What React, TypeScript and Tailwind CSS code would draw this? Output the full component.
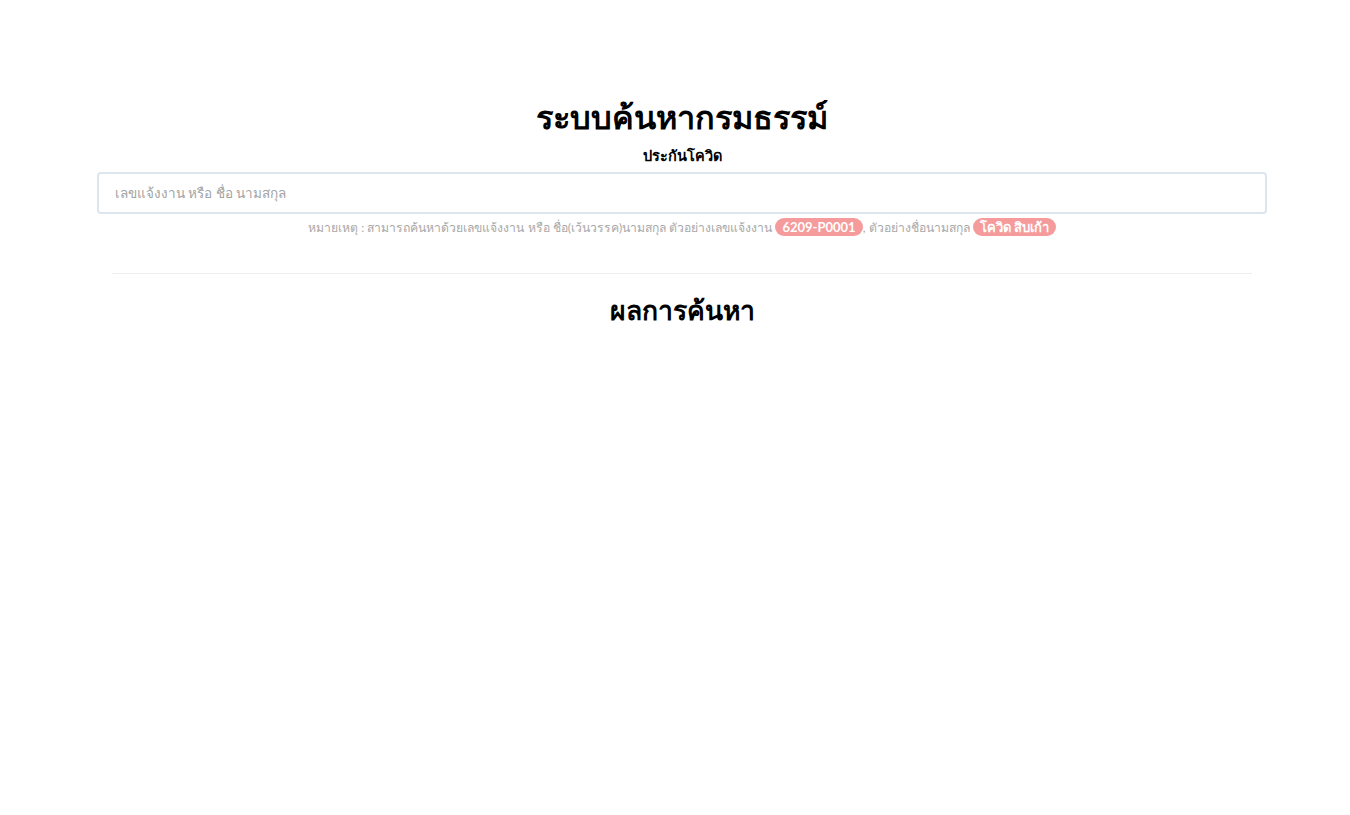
import React from 'react';

export default function App() {
  return (
    <div className="min-h-screen bg-white pl-[14px] font-['Lato','Noto_Sans',sans-serif] text-black">
      <div className="mx-auto w-[1170px] pt-[94px]">
        <h1 className="text-center text-[32.5px] font-bold leading-[46px]">ระบบค้นหากรมธรรม์</h1>
        <p className="mt-[6px] text-center text-[14.5px] font-bold leading-[20px]">ประกันโควิด</p>
        <input
          type="text"
          placeholder="เลขแจ้งงาน หรือ ชื่อ นามสกุล"
          className="mt-[6px] block h-[42px] w-full rounded-[4px] border-2 border-[#dde5ee] px-[16px] text-[13.5px] outline-none placeholder:text-[#a3a3a3]"
        />
        <p className="mt-[3px] text-center text-[12.2px] leading-[20px] text-[#a8a8a8]">
          หมายเหตุ : สามารถค้นหาด้วยเลขแจ้งงาน หรือ ชื่อ(เว้นวรรค)นามสกุล ตัวอย่างเลขแจ้งงาน{' '}
          <span className="rounded-full bg-[#f69b9b] px-[7px] py-[1px] text-[13px] font-bold text-white">6209-P0001</span>, ตัวอย่างชื่อนามสกุล{' '}
          <span className="rounded-full bg-[#f69b9b] px-[7px] py-[1px] text-[13px] font-bold text-white">โควิด สิบเก้า</span>
        </p>
        <div className="mx-[15px] mt-[35px] border-t border-[#eeeeee]" />
        <h2 className="mt-[18px] text-center text-[26.5px] font-bold leading-[36px]">ผลการค้นหา</h2>
      </div>
    </div>
  );
}
